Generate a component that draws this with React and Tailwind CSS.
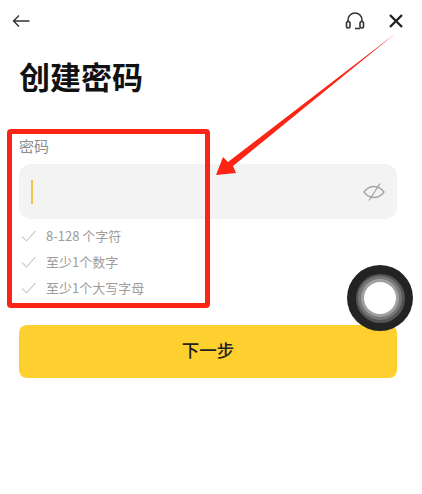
const cjk = "font-['Noto_Sans_CJK_SC','Noto_Sans',sans-serif]";

const rules = ["8-128 个字符", "至少1个数字", "至少1个大写字母"];

function BackIcon() {
  return (
    <svg width="18" height="14" viewBox="0 0 18 14" fill="none" stroke="#333" strokeWidth="1.4">
      <path d="M17.5 7H1.5M7 1.5 1.5 7 7 12.5" />
    </svg>
  );
}

function HeadsetIcon() {
  return (
    <svg width="20" height="18" viewBox="0 0 20 18" fill="none" stroke="#333" strokeWidth="1.6">
      <path d="M3 10V8a7 7 0 0 1 14 0v2" />
      <rect x="1.5" y="9.5" width="3.5" height="6.5" rx="1.7" />
      <rect x="15" y="9.5" width="3.5" height="6.5" rx="1.7" />
      <path d="M10 16.5h5" />
    </svg>
  );
}

function CloseIcon() {
  return (
    <svg width="16" height="16" viewBox="0 0 16 16" fill="none" stroke="#222" strokeWidth="2.4">
      <path d="M2 2 14 14M14 2 2 14" />
    </svg>
  );
}

function EyeSlashIcon() {
  return (
    <svg width="22" height="20" viewBox="0 0 22 20" fill="none" stroke="#a3a3a3" strokeWidth="1.3">
      <path d="M1 10C4 6 7.500 4.500 11 4.500S18 6 21 10C18 14 14.500 15.500 11 15.500S4 14 1 10Z" />
      <path d="M6 18.500 17 1.500" />
    </svg>
  );
}

function CheckIcon() {
  return (
    <svg width="15" height="12" viewBox="0 0 15 12" fill="none" stroke="#cfcfcf" strokeWidth="1.2">
      <path d="M1 6.500 5.500 11 14.500 1" />
    </svg>
  );
}

export default function App() {
  return (
    <div className={`relative h-[494px] w-[422px] overflow-hidden bg-white ${cjk}`}>
      <header className="flex h-[41px] items-center justify-between pl-[12px] pr-[18px]">
        <BackIcon />
        <div className="flex items-center gap-[23px]">
          <HeadsetIcon />
          <CloseIcon />
        </div>
      </header>

      <main className="pl-[19px] pr-[25px]">
        <h1 className="mt-[15px] text-[31px] leading-[40px] font-bold text-[#111]">创建密码</h1>

        <p className="mt-[40px] text-[15px] leading-[20px] text-[#8c8c8c]">密码</p>

        <div className="mt-[8px] flex h-[55px] items-center justify-between rounded-[12px] bg-[#f3f3f3] pl-[12px] pr-[12px]">
          <span className="h-[24px] w-[2px] bg-[#f3c64a]" />
          <EyeSlashIcon />
        </div>

        <ul className="mt-[4px]">
          {rules.map((rule) => (
            <li key={rule} className="flex h-[26px] items-center gap-[10px] pl-[2px] text-[13px] text-[#9c9c9c]">
              <CheckIcon />
              {rule}
            </li>
          ))}
        </ul>

        <button className="mt-[24px] h-[53px] w-full rounded-[8px] bg-[#fdd02f] pb-[3px] text-[17.5px] font-medium text-[#222]">
          下一步
        </button>
      </main>

      {/* annotation box */}
      <div className="absolute top-[129px] left-[7px] h-[179px] w-[203px] rounded-[4px] border-[5px] border-[#fb2516]" />

      {/* annotation arrow */}
      <svg className="absolute top-0 left-0" width="422" height="494" viewBox="0 0 422 494">
        <path d="M396 33 L233 166 L236 173 L216 175 L223 157 L228 162 Z" fill="#fb2516" />
      </svg>

      {/* floating assistive ball */}
      <div className="absolute top-[265px] left-[347px] flex h-[66px] w-[66px] items-center justify-center rounded-full bg-[#232323]">
        <div className="flex h-[49px] w-[49px] items-center justify-center rounded-full bg-[#555555]">
          <div className="flex h-[44px] w-[44px] items-center justify-center rounded-full bg-[#777777]">
            <div className="flex h-[38px] w-[38px] items-center justify-center rounded-full bg-[#a0a0a0]">
              <div className="h-[32px] w-[32px] rounded-full bg-white" />
            </div>
          </div>
        </div>
      </div>
    </div>
  );
}
